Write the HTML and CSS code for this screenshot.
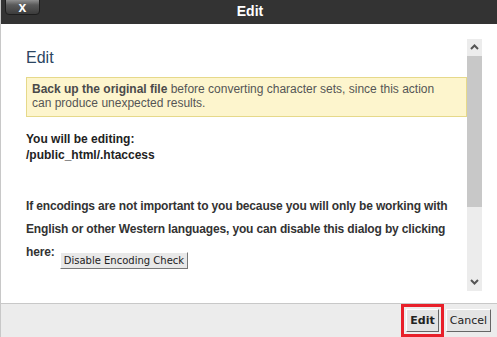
FILE: index.html
```html
<html>

<head>
    <meta charset="utf-8">
    <link rel="stylesheet" href="styles.css">
</head>

<body>
    <div class="dialog">
        <header class="titlebar">
            <button class="close">x</button>
            <span class="title">Edit</span>
        </header>

        <section class="body">
            <div class="content">
                <h2>Edit</h2>
                <div class="warning">
                    <strong>Back up the original file</strong> before converting character sets, since this action
                    can produce unexpected results.
                </div>
                <p class="target">
                    You will be editing:<br>
                    /public_html/.htaccess
                </p>
                <p class="note">
                    If encodings are not important to you because you will only be working with
                    English or other Western languages, you can disable this dialog by clicking
                    here: <button class="small">Disable Encoding Check</button>
                </p>
            </div>
            <div class="scrollbar">
                <div class="arrow">
                    <svg width="9" height="6" viewBox="0 0 9 6"><polyline points="1,5 4.5,1.5 8,5" fill="none" stroke="#555" stroke-width="2"/></svg>
                </div>
                <div class="thumb"></div>
                <div class="track"></div>
                <div class="arrow">
                    <svg width="9" height="6" viewBox="0 0 9 6"><polyline points="1,1 4.5,4.5 8,1" fill="none" stroke="#555" stroke-width="2"/></svg>
                </div>
            </div>
        </section>

        <footer class="buttons">
            <span class="focus"><button class="btn primary">Edit</button></span>
            <button class="btn">Cancel</button>
        </footer>
    </div>
</body>

</html>
```

FILE: styles.css
```css
html {
    background-color: white;
}

body {
    margin: 0;
    font-family: "Liberation Sans", Arial, sans-serif;
    font-size: 12px;
}

.dialog {
    width: 497px;
    height: 337px;
    display: flex;
    flex-direction: column;
    border-left: 1px solid #c8c8c8;
    box-sizing: border-box;
}

.titlebar {
    height: 24px;
    background-color: #333;
    display: flex;
    justify-content: center;
    position: relative;
}

.title {
    color: white;
    font-weight: bold;
    font-size: 14px;
    line-height: 22px;
    margin-left: 2px;
}

.close {
    position: absolute;
    left: 4px;
    top: -1px;
    width: 35px;
    height: 16px;
    padding: 0;
    display: flex;
    align-items: center;
    justify-content: center;
    border: 1px solid #1e1e1e;
    border-radius: 0 0 4px 4px;
    background: linear-gradient(#909090, #5a5a5a 35%, #3c3c3c);
    color: white;
    font-family: "Liberation Sans", sans-serif;
    font-weight: bold;
    font-size: 14px;
    line-height: 12px;
}

.body {
    height: 280px;
    display: flex;
    padding: 15px 15px 0 0;
    box-sizing: border-box;
}

.content {
    flex: 1;
    padding-left: 25px;
    overflow: hidden;
    height: 252px;
}

h2 {
    margin: 10px 0 0;
    font-size: 16px;
    font-weight: normal;
    color: #2c4662;
}

.warning {
    margin-top: 10px;
    background-color: #fdf5cd;
    border: 1px solid #e6d98a;
    padding: 4px 25px 6px 5px;
    color: #555;
    line-height: 14px;
}

.warning strong {
    color: #4a4a4a;
}

.target {
    margin: 14px 0 0;
    font-weight: bold;
    color: #222;
    line-height: 16px;
}

.note {
    margin: 32px 0 0;
    font-weight: bold;
    color: #333;
    line-height: 23px;
    letter-spacing: -0.15px;
    padding-right: 12px;
}

.small {
    font-family: "DejaVu Sans", sans-serif;
    font-size: 10px;
    letter-spacing: 0;
    margin-left: 2px;
    padding: 2px 3px;
    background-color: #e8e8e8;
    border: 1px solid;
    border-color: #fff #777 #777 #fff;
    color: #222;
    vertical-align: -8px;
}

.scrollbar {
    width: 15px;
    height: 252px;
    background-color: #ececec;
    display: flex;
    flex-direction: column;
}

.arrow {
    height: 17px;
    display: flex;
    align-items: center;
    justify-content: center;
}

.thumb {
    height: 151px;
    background-color: #c8c8c8;
}

.track {
    flex: 1;
}

.buttons {
    flex: 1;
    background-color: #ececec;
    border-top: 1px solid #c8c8c8;
    display: flex;
    justify-content: flex-end;
    align-items: center;
    gap: 2px;
    padding-right: 6px;
}

.focus {
    border: 3px solid #e8202a;
    padding: 2px;
    display: flex;
}

.btn {
    font-family: "DejaVu Sans", sans-serif;
    font-size: 11px;
    height: 23px;
    padding: 0 3px;
    background-color: #e4e4e4;
    border: 1px solid;
    border-color: #fff #666 #666 #fff;
    color: #222;
}

.primary {
    font-weight: bold;
}
```
